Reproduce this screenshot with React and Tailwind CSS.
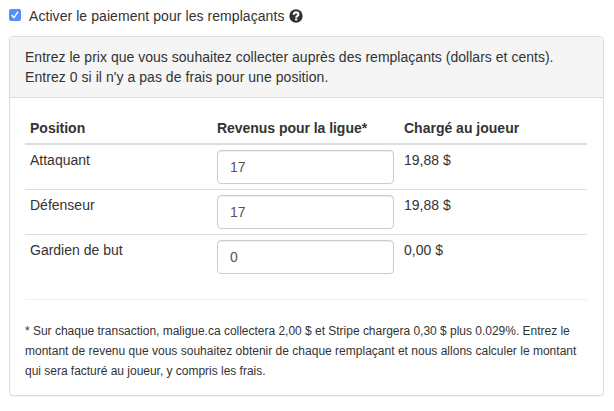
const rows = [
  { position: 'Attaquant', revenue: '17', charge: '19,88 $' },
  { position: 'Défenseur', revenue: '17', charge: '19,88 $' },
  { position: 'Gardien de but', revenue: '0', charge: '0,00 $' },
];

function Checkbox() {
  return (
    <svg className="mb-0.5 h-3 w-3 shrink-0" viewBox="0 0 12 12" role="checkbox" aria-checked="true">
      <rect width="12" height="12" rx="2" fill="#5290fb" />
      <path d="M3 6.4 5 8.6 8.7 3.2" fill="none" stroke="#fff" strokeWidth="1.5" strokeLinecap="round" strokeLinejoin="round" />
    </svg>
  );
}

function HelpIcon() {
  return (
    <svg className="mb-px h-3.5 w-3.5 shrink-0" viewBox="0 0 14 14">
      <circle cx="7" cy="7" r="6.7" fill="#333" />
      <path d="M4.700 5.700C4.700 4.200 5.600 3.400 7 3.400s2.400.8 2.400 2C9.400 7 7.200 6.800 7.200 8.700" fill="none" stroke="#fff" strokeWidth="2.100" />
      <rect x="6.100" y="9.500" width="2.200" height="1.900" fill="#fff" />
    </svg>
  );
}

export default function App() {
  return (
    <div className="h-[411px] w-[614px] bg-white pt-[6px] pl-[9px] font-['Liberation_Sans',Arial,sans-serif] text-sm leading-5 text-[#333]">
      <label className="flex h-5 items-center">
        <Checkbox />
        <span className="ml-2 whitespace-nowrap tracking-[0.065px]">Activer le paiement pour les remplaçants</span>
        <span className="ml-1 flex"><HelpIcon /></span>
      </label>
      <section className="mt-[10px] w-[595px] rounded border border-[#ddd] bg-white shadow-[0_1px_1px_rgba(0,0,0,0.05)]">
        <header className="rounded-t-[3px] border-b border-[#ddd] bg-[#f5f5f5] px-[15px] py-[10px] whitespace-nowrap">
          <p className="tracking-[0.02px]">Entrez le prix que vous souhaitez collecter auprès des remplaçants (dollars et cents).</p>
          <p className="tracking-[0.05px]">Entrez 0 si il n'y a pas de frais pour une position.</p>
        </header>
        <div className="px-[15px] pt-[14px] pb-[15px]">
          <table className="mb-5 w-[562px] table-fixed border-collapse text-left">
            <thead>
              <tr className="h-8 border-b-2 border-[#ddd] align-bottom">
                <th className="w-[187px] p-[5px]">Position</th>
                <th className="w-[187px] p-[5px] tracking-[-0.04px]">Revenus pour la ligue*</th>
                <th className="p-[5px]">Chargé au joueur</th>
              </tr>
            </thead>
            <tbody>
              {rows.map((row) => (
                <tr key={row.position} className="border-t border-[#ddd] align-top first:border-t-0">
                  <td className="p-[5px]">{row.position}</td>
                  <td className="p-[5px]">
                    <input
                      className="block h-[34px] w-[177px] rounded border border-[#ccc] bg-white px-3 py-1.5 text-sm text-[#555] shadow-[inset_0_1px_1px_rgba(0,0,0,0.075)]"
                      defaultValue={row.revenue}
                    />
                  </td>
                  <td className="p-[5px]">{row.charge}</td>
                </tr>
              ))}
            </tbody>
          </table>
          <hr className="mb-[21px] w-[562px] border-[#eee]" />
          <div className="-mb-px text-xs leading-5 whitespace-nowrap">
            <p className="tracking-[-0.015px]">* Sur chaque transaction, maligue.ca collectera 2,00 $ et Stripe chargera 0,30 $ plus 0.029%. Entrez le</p>
            <p className="tracking-[0.01px]">montant de revenu que vous souhaitez obtenir de chaque remplaçant et nous allons calculer le montant</p>
            <p className="tracking-[-0.02px]">qui sera facturé au joueur, y compris les frais.</p>
          </div>
        </div>
      </section>
    </div>
  );
}
